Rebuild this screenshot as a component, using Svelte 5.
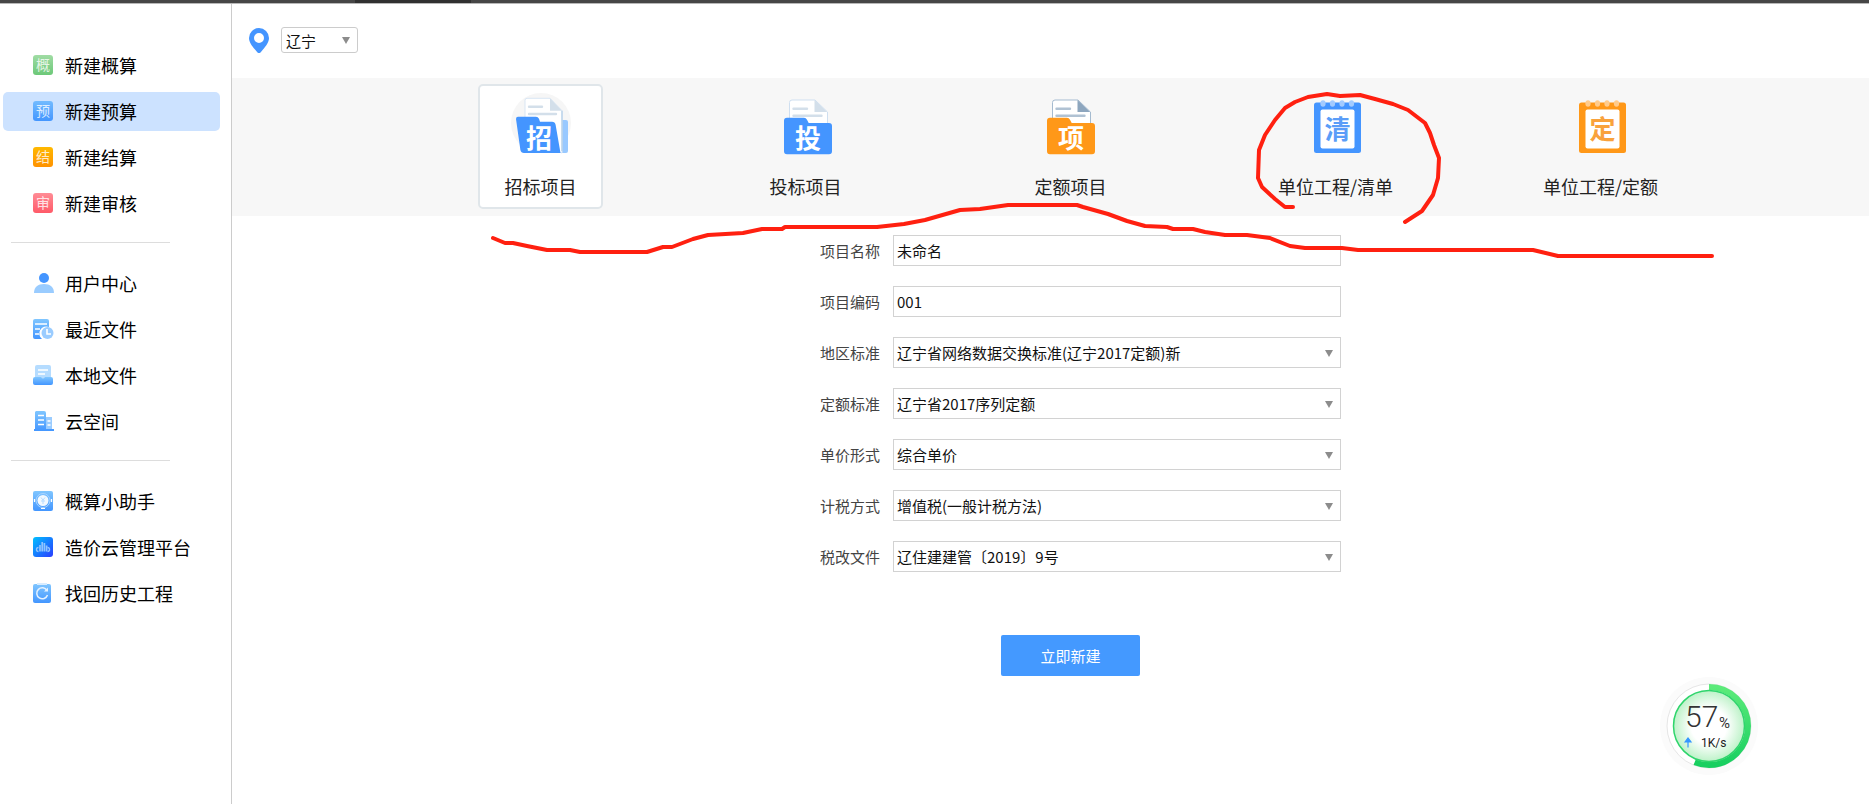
<script lang="ts">
  type NavItem = { id: string; label: string; icon: string; char?: string };

  const navGroups: NavItem[][] = [
    [
      { id: 'estimate', label: '新建概算', icon: 'green', char: '概' },
      { id: 'budget', label: '新建预算', icon: 'blue', char: '预' },
      { id: 'settle', label: '新建结算', icon: 'orange', char: '结' },
      { id: 'audit', label: '新建审核', icon: 'red', char: '审' },
    ],
    [
      { id: 'user', label: '用户中心', icon: 'user' },
      { id: 'recent', label: '最近文件', icon: 'recent' },
      { id: 'local', label: '本地文件', icon: 'local' },
      { id: 'cloud', label: '云空间', icon: 'cloud' },
    ],
    [
      { id: 'helper', label: '概算小助手', icon: 'helper' },
      { id: 'platform', label: '造价云管理平台', icon: 'platform' },
      { id: 'history', label: '找回历史工程', icon: 'history' },
    ],
  ];

  const projectTypes = [
    { id: 'tender', label: '招标项目', kind: 'open', char: '招' },
    { id: 'bid', label: '投标项目', kind: 'folder', char: '投' },
    { id: 'quota', label: '定额项目', kind: 'folder-orange', char: '项' },
    { id: 'unit-list', label: '单位工程/清单', kind: 'pad', char: '清' },
    { id: 'unit-quota', label: '单位工程/定额', kind: 'pad-orange', char: '定' },
  ];

  const selects = [
    { id: 'region', label: '地区标准', options: ['辽宁省网络数据交换标准(辽宁2017定额)新'] },
    { id: 'norm', label: '定额标准', options: ['辽宁省2017序列定额'] },
    { id: 'price', label: '单价形式', options: ['综合单价'] },
    { id: 'tax', label: '计税方式', options: ['增值税(一般计税方法)'] },
    { id: 'taxfile', label: '税改文件', options: ['辽住建建管〔2019〕9号'] },
  ];

  let activeNav = $state('budget');
  let activeType = $state('tender');
  let projectName = $state('未命名');
  let projectCode = $state('001');
</script>

{#snippet navIcon(name: string)}
  <svg class="nav-svg" viewBox="0 0 20 20" aria-hidden="true">
    {#if name === 'user'}
      <circle cx="11" cy="5" r="5" fill="#4495ff" />
      <path d="M1 20c0-6 4-9 10-9s10 3 10 9z" fill="#9accff" />
    {:else if name === 'recent'}
      <path d="M2 0h12q2 0 2 2v6a7 7 0 0 0-7 12H2q-2 0-2-2V2q0-2 2-2z" fill="url(#g-blue)" />
      <path d="M2 5h12M2 10h5M2 15h4" stroke="#fff" stroke-width="1.4" />
      <circle cx="14.5" cy="14" r="6" fill="#9accff" />
      <path d="M14 10v5h4" fill="none" stroke="#fff" stroke-width="1.6" />
    {:else if name === 'local'}
      <rect x="2" y="0" width="16" height="16" rx="2" fill="#b5dcff" />
      <path d="M5 5h10M5 9h7" stroke="#fff" stroke-width="1.5" />
      <path d="M2 12h6q2 3 4 0h6q2 0 2 2v4q0 2-2 2H2q-2 0-2-2v-4q0-2 2-2z" fill="url(#g-blue)" />
    {:else if name === 'cloud'}
      <rect x="13" y="6" width="6" height="13" fill="#9accff" />
      <path d="M3 0h8q2 0 2 2v16h8v2H1v-2h1V1z" fill="url(#g-blue)" />
      <path d="M5 4.500h6M5 9h6M5 13.500h6M14.500 10h3M14.500 14h3" stroke="#fff" stroke-width="1.5" />
    {:else if name === 'helper'}
      <rect width="20" height="20" rx="2" fill="url(#g-blue)" />
      <circle cx="10" cy="9.500" r="7" fill="none" stroke="#a9d5ff" />
      <circle cx="10" cy="9.500" r="5.500" fill="#f2f9ff" />
      <path d="M8 6.500l2 2.500 2-2.500M10 9v4M8 10h4" fill="none" stroke="#b5dbff" />
      <path d="M1.500 8v3M18.500 8v3M8 17.500h4" stroke="#fff" stroke-width="1.2" />
    {:else if name === 'platform'}
      <rect width="20" height="20" rx="3" fill="url(#g-deep)" />
      <path d="M5.500 14.500a2 2 0 0 1 0-4M14.500 14.500a2 2 0 0 0 0-4" fill="none" stroke="#8fc4ff" stroke-width="1.4" />
      <path d="M7 14.500V8M9.200 14.500V5M11.400 14.500V6M13.600 14.500V8.500" stroke="#8fc4ff" stroke-width="1.7" />
    {:else}
      <rect y="1" width="18" height="19" rx="2" fill="url(#g-blue)" />
      <path d="M4 1h10" stroke="#d8ecff" stroke-width="2" />
      <path d="M14 7.500A5.500 5.500 0 1 0 14.500 12" fill="none" stroke="#e5f2ff" stroke-width="1.500" />
      <path d="M15 4.500v4h-4z" fill="#e5f2ff" />
    {/if}
  </svg>
{/snippet}

{#snippet typeIcon(kind: string, char: string)}
  <svg class="type-svg" viewBox="0 0 60 60" aria-hidden="true">
    {#if kind === 'open'}
      <circle cx="30" cy="30" r="30" fill="#f6f6f6" />
      <path d="M49 27h6q2 0 2 2v29q0 2-2 2h-6z" fill="#99c9ff" />
      <path d="M16 5.300h23L51 17.700V60l-3-1L14 30V7.300q0-2 2-2z" fill="#fff" stroke="#d9e6f4" />
      <path d="M39 5.300v12.400h12z" fill="#d3dfea" />
      <path d="M51 17.700V58" stroke="#b5cfe8" stroke-width="1.3" />
      <path d="M18 13.700h13M18 21h27" stroke="#d3dfea" stroke-width="2.400" stroke-linecap="round" />
      <path d="M7 23.700h18q2 0 3 2l1 3h12q3 0 3.600 3L49.500 60H13q-3 0-3.600-3L5 26q0-2.300 2-2.300z" fill="#4495ff" />
      <text x="28" y="55" class="folder-char" fill="#fff">{char}</text>
    {:else if kind === 'folder' || kind === 'folder-orange'}
      {@const orange = kind === 'folder-orange'}
      <g transform={orange ? '' : 'translate(2 0)'}>
        <path d="M14 7h23l12.500 12V32H11.500V9.500Q11.500 7 14 7z" fill="#fff" stroke={orange ? '#a5bbd0' : '#cfdff0'} />
        <path d="M36.500 7v12h12.700z" fill={orange ? '#8da6be' : '#d3dfea'} />
        <path d="M15.500 15.700H29M15.500 22.700H43.500" stroke={orange ? '#b0c2d3' : '#d3dfea'} stroke-width="2.400" stroke-linecap="round" />
        <path d="M9 24.700h17q2 0 3 2l1.700 3.300H51q3 0 3 3v25.300q0 3-3 3H9q-3 0-3-3V27.700q0-3 3-3z" fill={orange ? '#ff9818' : '#4495ff'} />
        <text x="30" y="55" class="folder-char" fill="#fff">{char}</text>
      </g>
    {:else}
      {@const orange = kind === 'pad-orange'}
      <rect x="8" y="9.500" width="47" height="50.500" rx="2.500" fill={orange ? '#ff9818' : '#4495ff'} />
      <rect x="14.500" y="16.500" width="34" height="39" rx="2" fill="#fff" />
      {#each [17, 26.5, 36, 45.5] as cx}
        <ellipse {cx} cy="10.500" rx="2.600" ry="3.200" fill={orange ? '#ffcb8c' : '#a3cbff'} />
      {/each}
      <text x="31.500" y="45.500" class="pad-char" fill={orange ? '#f9a23c' : '#5a9df8'}>{char}</text>
    {/if}
  </svg>
{/snippet}

<svg class="defs" width="0" height="0" aria-hidden="true">
  <defs>
    <linearGradient id="g-blue" x1="0" y1="0" x2="0" y2="1">
      <stop offset="0" stop-color="#80c6ff" />
      <stop offset="1" stop-color="#4396ff" />
    </linearGradient>
    <linearGradient id="g-deep" x1="0" y1="0" x2="1" y2="1">
      <stop offset="0" stop-color="#00c0ff" />
      <stop offset="1" stop-color="#2b3cff" />
    </linearGradient>
    <!-- runs along x because the ring is rotated a quarter turn -->
    <linearGradient id="g-ring" x1="1" y1="0" x2="0" y2="0">
      <stop offset="0" stop-color="#5ceb7a" />
      <stop offset="1" stop-color="#18cf60" />
    </linearGradient>
    <radialGradient id="g-disc">
      <stop offset="0.5" stop-color="#fff" />
      <stop offset="1" stop-color="#bdf2c8" />
    </radialGradient>
  </defs>
</svg>

<div class="page">
  <div class="titlebar"><span class="titlebar-tab"></span></div>

  <div class="body">
    <nav class="sidebar">
      {#each navGroups as group}
        <ul class="nav-group">
          {#each group as item (item.id)}
            <li>
              <button class="nav-item" class:active={activeNav === item.id} onclick={() => (activeNav = item.id)}>
                {#if item.char}
                  <span class="nav-badge nav-badge--{item.icon}">{item.char}</span>
                {:else}
                  {@render navIcon(item.icon)}
                {/if}
                <span>{item.label}</span>
              </button>
            </li>
          {/each}
        </ul>
      {/each}
    </nav>

    <main class="main">
      <div class="location">
        <svg class="pin" viewBox="0 0 20 25" aria-hidden="true">
          <path fill-rule="evenodd" d="M10 0a10 10 0 0 1 10 10c0 4-3 8-6 11.500L11.500 24.500q-1.500 1-3 0L6 21.500C3 18 0 14 0 10A10 10 0 0 1 10 0zm0 5a5 5 0 1 0 0 10a5 5 0 0 0 0-10z" fill="#4495ff" />
        </svg>
        <div class="select select--small">
          <select aria-label="地区">
            <option>辽宁</option>
          </select>
        </div>
      </div>

      <div class="types">
        <div class="types-inner">
          {#each projectTypes as t (t.id)}
            <button class="type" class:active={activeType === t.id} onclick={() => (activeType = t.id)}>
              {@render typeIcon(t.kind, t.char)}
              <span>{t.label}</span>
            </button>
          {/each}
        </div>
      </div>

      <form class="form" onsubmit={(e) => e.preventDefault()}>
        <div class="row">
          <label for="name">项目名称</label>
          <input id="name" type="text" bind:value={projectName} />
        </div>
        <div class="row">
          <label for="code">项目编码</label>
          <input id="code" type="text" bind:value={projectCode} />
        </div>
        {#each selects as s (s.id)}
          <div class="row">
            <label for={s.id}>{s.label}</label>
            <div class="select">
              <select id={s.id}>
                {#each s.options as o}
                  <option>{o}</option>
                {/each}
              </select>
            </div>
          </div>
        {/each}
        <button class="submit" type="submit">立即新建</button>
      </form>
    </main>
  </div>

  <!-- hand-drawn marks over the page -->
  <svg class="marks" width="1" height="1" aria-hidden="true">
    <polyline points="1293,207 1285,207 1275,199 1262,187 1258,178 1259,150 1265,135 1275,120 1285,108 1295,102 1308,97 1327,94 1340,96 1360,95 1375,99 1393,104 1408,110 1425,123 1430,133 1434,145 1439,158 1438,178 1433,195 1422,211 1405,222" />
    <polyline points="493,238 505,243 513,243 527,246 547,250 570,250 580,252 647,252 663,247 672,247 693,239 708,235 743,233 762,229 782,229 785,227 877,227 904,224 925,220 960,210 980,209 1008,205 1077,205 1083,207 1108,214 1127,221 1145,226 1167,227 1173,229 1193,229 1205,232 1225,235 1247,235 1270,238 1290,246 1305,248 1342,248 1358,250 1533,250 1558,256 1712,256" />
  </svg>

  <svg class="gauge" viewBox="0 0 104 104" role="img" aria-label="57%">
    <circle cx="52" cy="52" r="49" fill="#fbfbfb" />
    <circle cx="52" cy="52" r="42" fill="#fff" stroke="#e6e6e6" />
    <circle cx="52" cy="52" r="39" fill="none" stroke="url(#g-ring)" stroke-width="6" pathLength="100" stroke-dasharray="56 100" transform="rotate(-90 52 52)" />
    <circle cx="52" cy="52" r="35.500" fill="url(#g-disc)" stroke="#2fd56c" stroke-width="1.500" />
    <text x="28" y="53" class="gauge-num">57</text>
    <text x="62" y="54" class="gauge-pct">%</text>
    <path d="M31 73.500V66M28 68l3-4 3 4z" fill="#3597ff" stroke="#3597ff" stroke-width="1.200" />
    <text x="44" y="73" class="gauge-rate">1K/s</text>
  </svg>
</div>

<style>
  :global(body) {
    background: #fff;
    font-family: "Noto Sans CJK SC", "Noto Sans", sans-serif;
    color: #111;
  }

  button, input, select { font-family: inherit; color: inherit; }

  .defs { position: absolute; }

  .page {
    position: relative;
    display: flex; flex-direction: column;
    min-height: 100vh;
    overflow: hidden;
  }

  .titlebar {
    height: 3px;
    background: #464646;
    border-bottom: 1px solid #b8b8b8;
  }
  .titlebar-tab {
    display: block;
    width: 116px; height: 3px;
    margin-left: 355px;
    background: #303030;
  }

  .body { display: flex; flex: 1; }

  /* sidebar */
  .sidebar {
    flex: none;
    box-sizing: border-box;
    width: 232px;
    padding: 42px 11px 0 3px;
    border-right: 1px solid #ccc;
  }

  .nav-group {
    display: flex; flex-direction: column;
    gap: 7px;
    list-style: none;
    margin: 0; padding: 0;
  }
  .nav-group + .nav-group::before {
    content: "";
    width: 159px; height: 1px;
    margin: 19px 0 14px 8px;
    background: #ddd;
  }

  .nav-item {
    display: flex; align-items: center;
    gap: 12px;
    width: 100%; height: 39px;
    padding: 0 0 2px 30px;
    border: none; border-radius: 5px;
    background: none;
    font-size: 18px; line-height: 24px;
    color: #000;
    white-space: nowrap;
    cursor: pointer;
  }
  .nav-item.active { background: #cce2ff; }

  .nav-svg { width: 20px; height: 20px; overflow: visible; }
  .nav-badge {
    width: 20px; height: 20px;
    border-radius: 3px;
    font-size: 14px; line-height: 18px;
    text-align: center;
    color: rgba(255, 255, 255, 0.8);
  }
  .nav-badge--green { background: linear-gradient(#a0dca4, #6cc878); }
  .nav-badge--blue { background: linear-gradient(#72bbff, #4396ff); }
  .nav-badge--orange { background: linear-gradient(#ffb900, #ff9200); }
  .nav-badge--red { background: linear-gradient(#ff8c96, #ff5a68); }

  /* main column */
  .main { flex: 1; min-width: 0; }

  .location {
    display: flex; align-items: center;
    gap: 12px;
    box-sizing: border-box;
    height: 74px;
    padding: 0 17px 2px;
  }
  .pin { width: 20px; height: 25px; }

  .types {
    padding: 6px 0 7px 40px;
    background: #f7f7f7;
  }
  .types-inner {
    display: grid;
    grid-template-columns: repeat(5, 1fr);
    justify-items: center;
    max-width: 1325px;
    margin: 0 auto;
  }
  .type {
    display: flex; flex-direction: column; align-items: center;
    gap: 21px;
    box-sizing: border-box;
    width: 125px; height: 125px;
    padding: 7px 0 0;
    border: 2px solid transparent; border-radius: 5px;
    background: none;
    font-size: 18px; line-height: 24px;
    color: #222;
    white-space: nowrap;
    cursor: pointer;
  }
  .type.active { background: #fff; border-color: #e0e6ea; }

  .type-svg { width: 60px; height: 60px; flex: none; overflow: visible; }
  .folder-char { font-size: 26px; font-weight: 700; text-anchor: middle; }
  .pad-char { font-size: 26px; font-weight: 700; text-anchor: middle; }

  /* form */
  .form {
    display: flex; flex-direction: column; align-items: center;
    gap: 20px;
    padding: 19px 0 40px 40px;
    font-size: 15px;
  }
  .row { display: flex; align-items: center; gap: 13px; }
  .row label {
    width: 80px;
    text-align: right;
    line-height: 24px;
    color: #444;
  }
  .row input, .row select {
    box-sizing: border-box;
    width: 448px; height: 31px;
    padding: 0 3px;
    border: 1px solid #d2d2d2; border-radius: 0;
    background: #fff;
    font-size: 15px;
    outline: none;
  }

  .select { position: relative; display: flex; }
  .select select { appearance: none; }
  .select::after {
    content: "";
    position: absolute; right: 8px; top: 50%;
    border: 4px solid transparent;
    border-top: 7px solid #8c8c8c;
    border-bottom: none;
    margin-top: -3px;
    pointer-events: none;
  }
  .select--small select {
    box-sizing: border-box;
    width: 77px; height: 26px;
    padding: 0 4px;
    border: 1px solid #ccc; border-radius: 3px;
    background: #fff;
    font-size: 15px;
  }

  .submit {
    width: 139px; height: 41px;
    margin-top: 43px;
    border: none; border-radius: 2px;
    background: #4499ff;
    color: #fff;
    font-size: 15px;
    cursor: pointer;
  }
  .submit:hover { background: #3388f0; }

  .marks {
    position: absolute; left: 0; top: 0;
    overflow: visible;
    pointer-events: none;
  }
  .marks polyline {
    fill: none;
    stroke: #ff2010;
    stroke-width: 4;
    stroke-linecap: round; stroke-linejoin: round;
  }

  .gauge {
    position: absolute; right: 108px; bottom: 26px;
    width: 104px; height: 104px;
    font-family: Roboto, sans-serif;
  }
  .gauge-num { font-size: 30px; font-weight: 300; fill: #333; }
  .gauge-pct { font-size: 15px; fill: #333; }
  .gauge-rate { font-size: 12px; fill: #222; }
</style>
